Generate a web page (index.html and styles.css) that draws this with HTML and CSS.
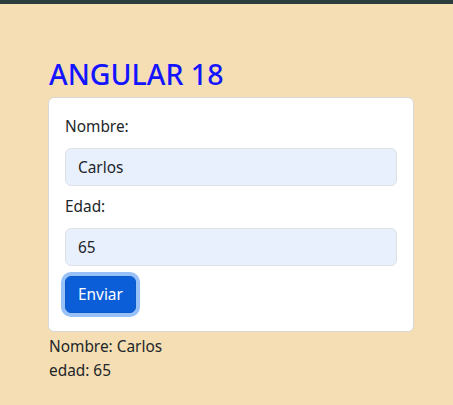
FILE: index.html
```html
<!DOCTYPE html>
<html lang="es">
<head>
<meta charset="utf-8">
<title>Angular 18</title>
<link rel="stylesheet" href="styles.css">
</head>
<body>
<div class="topbar"></div>
<main class="page">
  <h1 class="title">ANGULAR 18</h1>
  <form class="card">
    <label class="label" for="nombre">Nombre:</label>
    <input class="input" id="nombre" type="text" value="Carlos">
    <label class="label label-gap" for="edad">Edad:</label>
    <input class="input" id="edad" type="text" value="65">
    <div class="actions"><button class="btn" type="button">Enviar</button></div>
  </form>
  <p class="out">Nombre: Carlos</p>
  <p class="out">edad: 65</p>
</main>
</body>
</html>
```
FILE: styles.css
```css
html, body {
  margin: 0;
  padding: 0;
  background: #f5deb3;
  font-family: "Noto Sans", "Open Sans", sans-serif;
  color: #212529;
  font-size: 15.4px;
  line-height: 24px;
}
.topbar {
  height: 4px;
  background: #2a3d3f;
}
.page {
  margin-left: 48px;
  width: 366px;
  padding-top: 50px;
}
.title {
  margin: 0 0 3px 1px;
  font-size: 28.5px;
  line-height: 40px;
  font-weight: 500;
  color: #1414ff;
  letter-spacing: 0;
}
.card {
  display: flex;
  flex-direction: column;
  background: #fff;
  border: 1px solid #d8d8d8;
  border-radius: 6px;
  padding: 17px 16px 16px;
}
.label {
  display: block;
  margin-bottom: 9px;
}
.label-gap {
  margin-top: 9px;
}
.input {
  box-sizing: border-box;
  height: 38px;
  width: 100%;
  margin: 0;
  padding: 6px 12px;
  border: 1px solid #dee2e6;
  border-radius: 6px;
  background: #e8f0fe;
  font: inherit;
  color: #212529;
}
.actions {
  margin-top: 10px;
  margin-bottom: 2px;
  display: flex;
}
.btn {
  height: 37px;
  padding: 0 12px;
  border: 1px solid #0a58ca;
  border-radius: 6px;
  background: #0b5ed7;
  color: #fff;
  font: inherit;
  box-shadow: 0 0 0 4px #98c1f7;
}
.out {
  margin: 3px 0 0 1px;
}
.out + .out {
  margin-top: 0;
}
```
